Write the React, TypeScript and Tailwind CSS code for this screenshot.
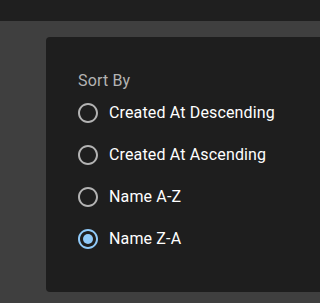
import React from "react";

const options = [
  { value: "createdDesc", label: "Created At Descending" },
  { value: "createdAsc", label: "Created At Ascending" },
  { value: "nameAsc", label: "Name A-Z" },
  { value: "nameDesc", label: "Name Z-A" },
];

function RadioIcon({ checked }: { checked: boolean }) {
  return (
    <svg viewBox="0 0 24 24" className="h-6 w-6" fill="currentColor">
      <path d="M12 2C6.48 2 2 6.48 2 12s4.48 10 10 10 10-4.48 10-10S17.52 2 12 2zm0 18c-4.42 0-8-3.58-8-8s3.58-8 8-8 8 3.58 8 8-3.58 8-8 8z" />
      {checked && <circle cx="12" cy="12" r="5" />}
    </svg>
  );
}

export default function App() {
  const [sort, setSort] = React.useState("nameDesc");

  return (
    <div
      className="flex h-screen w-full flex-col overflow-hidden bg-[#3f3f3f] tracking-[0.15px]"
      style={{ fontFamily: "Roboto, 'Liberation Sans', sans-serif" }}
    >
      <div className="h-[21px] shrink-0 bg-[#1f1f1f]" />

      <div className="flex pl-[46px] pt-4">
        <div className="h-[255px] flex-1 rounded-l bg-[#1e1e1e] p-8">
          <div className="text-base leading-[23px] text-[#b3b3b3]">Sort By</div>

          <div className="flex flex-col">
            {options.map((opt) => {
              const checked = sort === opt.value;
              return (
                <label
                  key={opt.value}
                  className="-ml-[11px] flex h-[42px] cursor-pointer items-center"
                  onClick={() => setSort(opt.value)}
                >
                  <span
                    className={`flex h-[42px] w-[42px] items-center justify-center ${
                      checked ? "text-[#90caf9]" : "text-[#b3b3b3]"
                    }`}
                  >
                    <RadioIcon checked={checked} />
                  </span>
                  <span className="whitespace-nowrap text-base leading-6 text-white">
                    {opt.label}
                  </span>
                </label>
              );
            })}
          </div>
        </div>
      </div>
    </div>
  );
}
